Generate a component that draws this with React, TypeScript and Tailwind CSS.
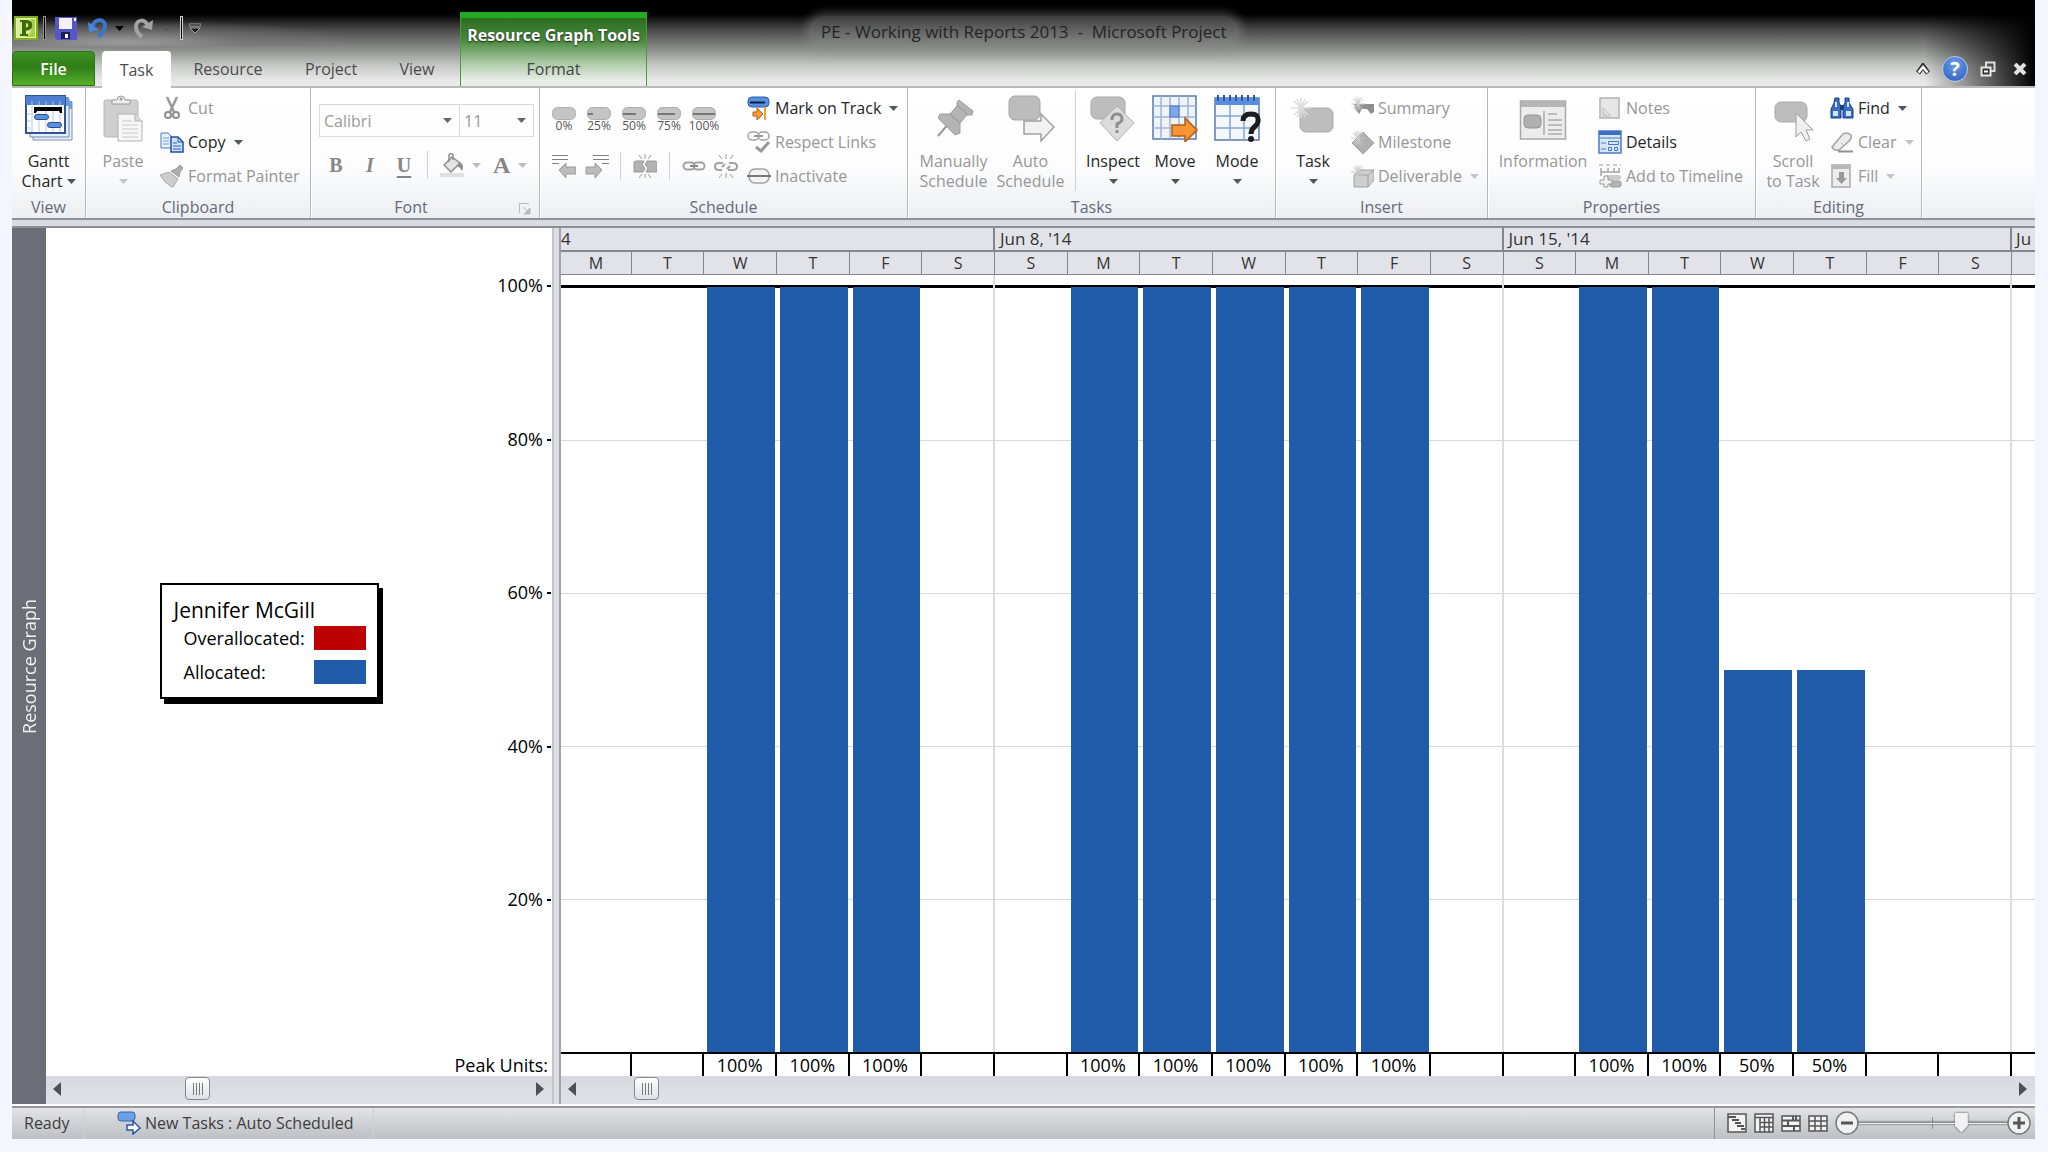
import type { ReactNode } from "react";

const days = [
  { day: "M", units: 0 },
  { day: "T", units: 0 },
  { day: "W", units: 100 },
  { day: "T", units: 100 },
  { day: "F", units: 100 },
  { day: "S", units: 0, weekEnd: true },
  { day: "S", units: 0 },
  { day: "M", units: 100 },
  { day: "T", units: 100 },
  { day: "W", units: 100 },
  { day: "T", units: 100 },
  { day: "F", units: 100 },
  { day: "S", units: 0, weekEnd: true },
  { day: "S", units: 0 },
  { day: "M", units: 100 },
  { day: "T", units: 100 },
  { day: "W", units: 50 },
  { day: "T", units: 50 },
  { day: "F", units: 0 },
  { day: "S", units: 0, weekEnd: true },
  { day: "", units: 0 },
];

const dayColumns = "grid grid-cols-[71fr_repeat(19,73fr)_23fr]";

const axisLabels = ["100%", "80%", "60%", "40%", "20%"];

function Arrow({ className = "text-[#555]" }: { className?: string }) {
  return (
    <svg viewBox="0 0 9 5" className={`h-[5px] w-[9px] shrink-0 ${className}`} aria-hidden="true">
      <path d="M0 0H9L4.500 5Z" fill="currentColor" />
    </svg>
  );
}

function Big({ children }: { children: ReactNode }) {
  return (
    <svg viewBox="0 0 48 48" className="size-12" fill="none" aria-hidden="true">
      {children}
    </svg>
  );
}

function Small({ children }: { children: ReactNode }) {
  return (
    <svg viewBox="0 0 24 24" className="size-6 shrink-0" fill="none" aria-hidden="true">
      {children}
    </svg>
  );
}

function Sparkle() {
  return (
    <path
      d="M8 1V15M1 8H15M3 3L13 13M13 3L3 13M5.300 1.500L10.700 14.500M10.700 1.500L5.300 14.500"
      stroke="#c9c9c9"
      strokeWidth="1"
    />
  );
}

function Group({ label, className, launcher, children }: { label: string; className: string; launcher?: boolean; children: ReactNode }) {
  return (
    <section
      aria-label={label}
      className={`flex shrink-0 flex-col border-r border-[#b4b7bc] pt-[3px] shadow-[1px_0_0_#fff] ${className}`}
    >
      <div className="flex h-[104px] shrink-0">{children}</div>
      <div className={`relative flex h-6 shrink-0 items-center justify-center text-[#656b78] ${launcher ? "pr-7" : ""}`}>
        {label}
        {launcher && (
          <button type="button" aria-label="Font settings" className="absolute right-2 top-2">
            <svg viewBox="0 0 12 12" className="size-3" fill="none" stroke="#b9b9b9" aria-hidden="true">
              <path d="M.5 10V.5H10M4 4L8 8" />
              <path d="M11 5V11H5Z" fill="#b9b9b9" />
            </svg>
          </button>
        )}
      </div>
    </section>
  );
}

function BigButton({ lines, icon, className, off, arrow }: { lines: string[]; icon: ReactNode; className: string; off?: boolean; arrow?: "inline" | "below" }) {
  return (
    <button
      type="button"
      className={`flex shrink-0 flex-col items-center pt-[3px] leading-5 ${off ? "text-[#969696]" : "text-[#262626]"} ${className}`}
    >
      {icon}
      <span className="mt-[9px] whitespace-nowrap">{lines[0]}</span>
      {lines[1] && (
        <span className="flex items-center gap-1 whitespace-nowrap">
          {lines[1]}
          {arrow === "inline" && <Arrow />}
        </span>
      )}
      {arrow === "below" && <Arrow className={off ? "mt-2 text-[#c4c4c4]" : "mt-2 text-[#555]"} />}
    </button>
  );
}

function Row({ label, icon, off, arrow }: { label: string; icon: ReactNode; off?: boolean; arrow?: boolean }) {
  return (
    <button
      type="button"
      className={`flex h-[34px] items-center gap-1 whitespace-nowrap ${off ? "text-[#969696]" : "text-[#262626]"}`}
    >
      {icon}
      {label}
      {arrow && <Arrow className={off ? "ml-1 text-[#c4c4c4]" : "ml-1 text-[#555]"} />}
    </button>
  );
}

function Divider({ className }: { className: string }) {
  return <span className={`w-px shrink-0 bg-[#cfd0d3] ${className}`} />;
}

function TitleBar() {
  return (
    <header className="flex h-[88px] shrink-0 border-b-2 border-[#b9b9b9] bg-[linear-gradient(180deg,#000_0,#000_14px,#4a4a4a_30px,#8f918f_50px,#c8cac8_66px,#e6e7e6_80px,#ebebeb_86px)]">
      <div className="flex w-[448px] shrink-0 flex-col justify-between">
        <div className="mt-[10px] flex h-9 items-center bg-[radial-gradient(ellipse_at_25%_90%,#9a9a9a_0%,#77777799_25%,transparent_50%)] pl-[2px]">
          <svg viewBox="0 0 24 24" className="size-6" aria-label="Project" role="img">
            <rect x="1" y="1" width="22" height="22" fill="#e4f2b4" stroke="#7fae1c" strokeWidth="2" />
            <path d="M3 3H21V21H12Q3 14 3 3Z" fill="#a9cf45" />
            <path d="M3 3H17V16L12 21H3Z" fill="#d9ec9c" />
            <path fillRule="evenodd" d="M6 4H13C20 4 20 14 13 14.500H12V18H14V20H6V18H8V6H6V4ZM12 7V11.500C15 11.500 15 7 12 7Z" fill="#3f6b08" />
          </svg>
          <span className="ml-[5px] h-6 w-[3px] border border-[#8f8f8f] bg-black" />
          <button type="button" aria-label="Save" className="ml-[9px]">
            <svg viewBox="0 0 22 24" className="h-6 w-[22px]" aria-hidden="true">
              <path d="M0 1H22V24H2L0 22Z" fill="#5557c8" />
              <path d="M4 2H17V13H4Z" fill="#f2f3ff" />
              <path d="M6 16H15V23H6Z" fill="#1d1e55" />
              <path d="M10 18H13V22H10ZM19 2H21V5H19Z" fill="#fff" />
            </svg>
          </button>
          <button type="button" aria-label="Undo" className="ml-[10px] flex items-center gap-[6px]">
            <svg viewBox="0 0 22 22" className="size-[22px]" fill="none" aria-hidden="true">
              <path d="M5 11C7 1 18 1 18 9C18 14 15 17 11 20" stroke="#3c76cf" strokeWidth="4" />
              <path d="M1 5L2 15L12 13Z" fill="#4a86df" />
            </svg>
            <Arrow className="text-black" />
          </button>
          <button type="button" aria-label="Redo" className="ml-2 flex items-center gap-2">
            <svg viewBox="0 0 22 22" className="size-[22px]" fill="none" aria-hidden="true">
              <path d="M16 10C14 1 4 2 4 10C4 14 6 17 10 20" stroke="#a3a3a3" strokeWidth="4" />
              <path d="M21 3L20 13L10 10Z" fill="#a3a3a3" />
            </svg>
            <Arrow className="text-[#555]" />
          </button>
          <span className="ml-[9px] h-6 w-[3px] border border-[#d0d0d0] bg-black" />
          <button type="button" aria-label="Customize toolbar" className="ml-[6px]">
            <svg viewBox="0 0 12 11" className="h-[11px] w-3" aria-hidden="true">
              <path d="M0 1H12V3H0ZM1 5H11L6 10Z" fill="#111" stroke="#d0d0d0" strokeWidth=".7" />
            </svg>
          </button>
        </div>
        <nav aria-label="Ribbon tabs" className="flex h-[35px] items-center text-[#4b4b4b]">
          <button
            type="button"
            className="h-full w-[83px] rounded-t border border-[#2a7414] bg-[linear-gradient(180deg,#3f9125,#2f7d16_45%,#55b02c)] font-semibold text-white"
          >
            File
          </button>
          <button type="button" className="ml-[7px] h-[37px] w-[69px] self-start rounded-t bg-white">Task</button>
          <button type="button" className="ml-[22px] w-[70px]">Resource</button>
          <button type="button" className="ml-[42px] w-[52px]">Project</button>
          <button type="button" className="ml-[41px] w-[38px]">View</button>
        </nav>
      </div>
      <div className="mt-3 flex w-[187px] shrink-0 flex-col items-center border-x border-[#4c9a40] border-t-[6px] border-t-[#22ab22] bg-[linear-gradient(180deg,#2c6d22_0,#47893b_22px,#a9c7a3_44px,#e8ede7_62px)]">
        <span className="mt-[5px] whitespace-nowrap font-bold leading-6 text-white [text-shadow:0_1px_2px_#222]">
          Resource Graph Tools
        </span>
        <button type="button" className="mt-3 leading-5 text-[#454545]">Format</button>
      </div>
      <div className="flex min-w-0 flex-1 justify-between bg-[linear-gradient(90deg,transparent_92%,#000_100%)]">
        <h1 className="ml-[162px] mt-4 h-8 whitespace-pre rounded-full bg-[#8a8c8a66] px-3 text-[17px] leading-8 text-[#242424] shadow-[0_0_8px_4px_#8a8c8a66]">
          PE - Working with Reports 2013  -  Microsoft Project
        </h1>
        <div className="mb-1 mr-2 flex items-center self-end">
          <button type="button" aria-label="Minimize ribbon">
            <svg viewBox="0 0 14 12" className="h-3 w-[14px]" fill="none" aria-hidden="true">
              <path d="M2 10L7 3L12 10" stroke="#333" strokeWidth="5" />
              <path d="M2.500 9.500L7 4L11.500 9.500" stroke="#fff" strokeWidth="2.500" />
            </svg>
          </button>
          <button type="button" aria-label="Help" className="ml-3 size-[26px] rounded-full border border-[#b8ccf0] bg-[radial-gradient(circle_at_50%_30%,#6c9be6,#2a5cc0)] text-xl font-bold leading-6 text-white">
            ?
          </button>
          <button type="button" aria-label="Restore window" className="ml-3">
            <svg viewBox="0 0 16 16" className="size-4" fill="none" aria-hidden="true">
              <path d="M6 6V1.500H14.500V10H11" stroke="#ddd" strokeWidth="2" />
              <rect x="1.500" y="6.500" width="9" height="8" fill="#333" stroke="#e6e6e6" strokeWidth="2" />
              <path d="M4 10.500H8" stroke="#fff" strokeWidth="2" />
            </svg>
          </button>
          <button type="button" aria-label="Close window" className="ml-[17px]">
            <svg viewBox="0 0 14 12" className="h-3 w-[14px]" aria-hidden="true">
              <path d="M2 1L12 11M12 1L2 11" stroke="#e2e2e2" strokeWidth="4" />
            </svg>
          </button>
        </div>
      </div>
    </header>
  );
}

const pills = [
  { label: "0%", end: 0 },
  { label: "25%", end: 6 },
  { label: "50%", end: 14 },
  { label: "75%", end: 18 },
  { label: "100%", end: 23 },
];

function Chain() {
  return (
    <>
      <rect x="1.500" y="8.500" width="11" height="7" rx="3.500" stroke="#a2a2a2" strokeWidth="2" />
      <rect x="11.500" y="8.500" width="11" height="7" rx="3.500" stroke="#a2a2a2" strokeWidth="2" />
      <path d="M8 12H16" stroke="#8a8a8a" strokeWidth="2" />
    </>
  );
}

function ScheduleTools() {
  return (
    <div className="flex w-[207px] flex-col pl-3">
      <div className="mt-4 flex">
        {pills.map((pill) => (
          <button key={pill.label} type="button" className="flex w-[35px] flex-col text-xs leading-3 text-[#555]">
            <svg viewBox="0 0 24 13" className="h-[13px] w-6" aria-hidden="true">
              <rect x=".5" y=".5" width="23" height="12" rx="5" fill="#c4c4c4" stroke="#adadad" />
              {pill.end > 0 && <path d={`M1 7H${pill.end}`} stroke="#777" strokeWidth="2" />}
            </svg>
            <span className="flex w-6 justify-center">{pill.label}</span>
          </button>
        ))}
      </div>
      <div className="mt-5 flex items-center">
        <button type="button" aria-label="Outdent task">
          <Small>
            <path d="M0 1.500H16M0 5.500H16M0 9.500H7" stroke="#808080" />
            <path d="M7 16L14 9V13H24V20H14V24Z" fill="#bcbcbc" stroke="#9a9a9a" />
          </Small>
        </button>
        <button type="button" aria-label="Indent task" className="ml-[9px]">
          <Small>
            <path d="M8 1.500H24M8 5.500H24M17 9.500H24" stroke="#808080" />
            <path d="M17 16L10 9V13H1V20H10V24Z" fill="#bcbcbc" stroke="#9a9a9a" />
          </Small>
        </button>
        <Divider className="ml-[11px] h-7" />
        <button type="button" aria-label="Split task" className="ml-3">
          <Small>
            <path d="M1 9Q1 7 3 7H11L9 11L12 14L10 18H1ZM14 7H22Q24 7 24 9V18H13L15 14L12 11Z" fill="#b2b2b2" stroke="#999" />
            <path d="M12 0V5M6 1L9 5M18 1L15 5M12 20V24M6 24L9 20M18 24L15 20" stroke="#999" />
          </Small>
        </button>
        <Divider className="ml-3 h-7" />
        <button type="button" aria-label="Link tasks" className="ml-3">
          <Small><Chain /></Small>
        </button>
        <button type="button" aria-label="Unlink tasks" className="ml-2">
          <Small>
            <path d="M9 9H5Q1 9 1 12.500T5 16H8M8 13L11 10M15 9H19Q23 9 23 12.500T19 16H14M13 15L16 12" stroke="#a2a2a2" strokeWidth="2" />
            <path d="M12 0V5M5 1L8 5M19 1L16 5M12 19V24M5 24L8 20M19 24L16 20" stroke="#999" />
          </Small>
        </button>
      </div>
    </div>
  );
}

function FontTools() {
  return (
    <div className="flex w-full flex-col pl-2">
      <div className="mt-[13px] flex text-[#999]">
        <label className="relative flex w-[141px] items-center">
          <select aria-label="Font" disabled className="h-[33px] w-full appearance-none border border-[#dadada] bg-transparent pl-1">
            <option>Calibri</option>
          </select>
          <Arrow className="absolute right-2 text-[#666]" />
        </label>
        <label className="relative -ml-px flex w-[75px] items-center">
          <select aria-label="Font size" disabled className="h-[33px] w-full appearance-none border border-[#dadada] bg-transparent pl-1">
            <option>11</option>
          </select>
          <Arrow className="absolute right-2 text-[#666]" />
        </label>
      </div>
      <div className="mt-[14px] flex h-7 items-center pl-[6px] font-['Liberation_Serif',serif] text-xl text-[#868686]">
        <button type="button" aria-label="Bold" className="w-[34px] pr-3 font-bold">B</button>
        <button type="button" aria-label="Italic" className="w-[34px] pr-3 font-bold italic">I</button>
        <button type="button" aria-label="Underline" className="w-[34px] pr-3 font-bold underline underline-offset-4">U</button>
        <Divider className="h-7" />
        <button type="button" aria-label="Background color" className="ml-3 flex items-center gap-2">
          <Small>
            <path d="M4 12L12 4L20 10L11 19Z" fill="#e4e4e4" stroke="#8f8f8f" strokeWidth="1.500" />
            <path d="M9 9V2Q11 -1 13 2V7" stroke="#8f8f8f" strokeWidth="1.500" />
            <path d="M19 9Q25 11 22 18Q20 14 17 13Z" fill="#8f8f8f" />
            <path d="M0 20H24V24H0Z" fill="#e0e0e0" />
          </Small>
          <Arrow className="text-[#bdbdbd]" />
        </button>
        <button type="button" aria-label="Font color" className="ml-3 flex items-center gap-2 text-2xl font-bold">
          A
          <Arrow className="text-[#bdbdbd]" />
        </button>
      </div>
    </div>
  );
}

function Ribbon() {
  return (
    <div className="flex h-[132px] shrink-0 overflow-hidden border-b-2 border-[#8e9196] bg-[linear-gradient(180deg,#fff_0%,#fdfdfe_60%,#eceef1_100%)]">
      <Group label="View" className="w-[74px]">
        <BigButton
          lines={["Gantt", "Chart"]}
          arrow="inline"
          className="w-[73px]"
          icon={
            <Big>
              <path d="M8 8H47V46H8Z" fill="#e9eef6" stroke="#7a90b5" />
              <path d="M5 5H44V43H5Z" fill="#e9eef6" stroke="#6a86b5" />
              <path d="M40 3H44V12H40ZM44 7H47V15H44Z" fill="#6f98dd" />
              <path d="M1 2H40V39H1Z" fill="#fff" stroke="#2d5596" strokeWidth="2" />
              <path d="M1 2H40V11H1Z" fill="#4f7fd0" />
              <path d="M7 7V11M14 7V11M21 7V11M28 7V11M35 7V11" stroke="#a5c2f2" />
              <path d="M7 12V38M14 12V38M21 12V38M28 12V38M35 12V38M2 20H6M2 27H6M2 34H6" stroke="#b5cbe8" />
              <path d="M9 13H37V19H35L34 17H12L11 19H9Z" fill="#000" />
              <rect x="9.500" y="20.500" width="14" height="5" rx="2.500" fill="#5b92dd" stroke="#254f8f" />
              <rect x="22.500" y="28.500" width="14" height="5" rx="2.500" fill="#5b92dd" stroke="#254f8f" />
            </Big>
          }
        />
      </Group>

      <Group label="Clipboard" className="w-[225px]">
        <BigButton
          lines={["Paste"]}
          off
          arrow="below"
          className="w-[74px]"
          icon={
            <Big>
              <rect x="5" y="6" width="34" height="37" rx="2" fill="#cfcfcf" stroke="#b9b9b9" />
              <path d="M13 10V6H18Q18 2 22 2T26 6H31V10Z" fill="#eee" stroke="#9d9d9d" />
              <circle cx="22" cy="5" r="1.500" fill="#999" />
              <path d="M19 20H36L43 27V47H19Z" fill="#f6f6f6" stroke="#b0b0b0" />
              <path d="M36 20V27H43" fill="#ddd" stroke="#b0b0b0" />
              <path d="M23 27H33M23 31H39M23 35H39M23 39H39M23 43H39" stroke="#c9c9c9" />
            </Big>
          }
        />
        <div className="flex flex-col">
          <Row
            label="Cut"
            off
            icon={
              <Small>
                <path d="M7 1L14 16M17 1L10 16" stroke="#9a9a9a" strokeWidth="2.500" />
                <circle cx="8" cy="19" r="3" stroke="#8f8f8f" strokeWidth="2" />
                <circle cx="16" cy="19" r="3" stroke="#8f8f8f" strokeWidth="2" />
              </Small>
            }
          />
          <Row
            label="Copy"
            arrow
            icon={
              <Small>
                <path d="M1 3H8L12 7V18H1Z" fill="#e8f1ff" stroke="#4676c6" />
                <path d="M3 8H9M3 11H9M3 14H9" stroke="#6d96d8" />
                <path d="M11 7H18L23 12V22H11Z" fill="#cfe1fb" stroke="#1f4fa8" strokeWidth="1.500" />
                <path d="M18 7V12H23" stroke="#1f4fa8" />
                <path d="M13 13H17M13 16H21M13 19H21" stroke="#3565b8" />
              </Small>
            }
          />
          <Row
            label="Format Painter"
            off
            icon={
              <Small>
                <path d="M0 11L9 8L18 15L13 23Q10 23 8 20L5 18Z" fill="#cdcdcd" stroke="#a9a9a9" />
                <path d="M11 7L16 5L20 1L23 4L20 8L19 13Z" fill="#aeaeae" stroke="#9a9a9a" />
              </Small>
            }
          />
        </div>
      </Group>

      <Group label="Font" className="w-[229px]" launcher>
        <FontTools />
      </Group>

      <Group label="Schedule" className="w-[368px]">
        <ScheduleTools />
        <div className="flex flex-col">
          <Row
            label="Mark on Track"
            arrow
            icon={
              <Small>
                <rect x="1" y="1" width="21" height="10" rx="4" fill="#5590df" stroke="#2d5ea8" />
                <path d="M3 6.500H18" stroke="#0c1f45" strokeWidth="2" />
                <path d="M18 11V24" stroke="#f0a040" strokeWidth="2" />
                <path d="M6 16H10V12L16 18L10 24V20H6Z" fill="#f29b38" stroke="#b4630d" />
              </Small>
            }
          />
          <Row
            label="Respect Links"
            off
            icon={
              <Small>
                <rect x="1" y="2" width="11" height="8" rx="4" stroke="#a2a2a2" strokeWidth="1.500" />
                <rect x="11" y="2" width="11" height="8" rx="4" stroke="#a2a2a2" strokeWidth="1.500" />
                <path d="M7 6H16" stroke="#999" strokeWidth="2" />
                <path d="M9 17L14 21L22 12" stroke="#999" strokeWidth="3" />
              </Small>
            }
          />
          <Row
            label="Inactivate"
            off
            icon={
              <Small>
                <rect x="2" y="5" width="20" height="14" rx="6" fill="#f4f4f4" stroke="#a0a0a0" strokeWidth="1.500" />
                <path d="M0 12H24" stroke="#777" strokeWidth="2" />
              </Small>
            }
          />
        </div>
      </Group>

      <Group label="Tasks" className="w-[368px]">
        <BigButton
          lines={["Manually", "Schedule"]}
          off
          className="ml-[7px] w-[77px]"
          icon={
            <Big>
              <path d="M8 42L20 28" stroke="#999" strokeWidth="2" />
              <path d="M29 6L43 17L42 21L37 21L30 29L30 39L25 41L8 24L10 20L20 20L27 12L27 8Z" fill="#b4b4b4" stroke="#9e9e9e" />
              <path d="M27 11L38 21M20 20L30 29" stroke="#8f8f8f" />
            </Big>
          }
        />
        <BigButton
          lines={["Auto", "Schedule"]}
          off
          className="w-[77px]"
          icon={
            <Big>
              <rect x="2" y="2" width="31" height="24" rx="6" fill="#bcbcbc" stroke="#a5a5a5" />
              <path d="M17 27H34V20L47 33L34 47V40H17Z" fill="#f2f2f2" stroke="#a0a0a0" strokeWidth="1.500" />
            </Big>
          }
        />
        <Divider className="ml-[6px] h-[100px]" />
        <BigButton
          lines={["Inspect"]}
          arrow="below"
          className="ml-[6px] w-[62px]"
          icon={
            <Big>
              <rect x="2" y="3" width="34" height="22" rx="6" fill="#bdbdbd" stroke="#a8a8a8" />
              <path d="M28 12L45 29L28 47L11 29Z" fill="#dcdcdc" stroke="#b3b3b3" />
              <path d="M23 26Q23 20 28 20T33 25Q33 28 28 30V34M28 36V39" stroke="#8f8f8f" strokeWidth="3" />
            </Big>
          }
        />
        <BigButton
          lines={["Move"]}
          arrow="below"
          className="w-[62px]"
          icon={
            <Big>
              <rect x="2" y="2" width="43" height="43" fill="#eef4fc" stroke="#5b79a8" strokeWidth="1.500" />
              <path d="M10 2V45M19 2V45M28 2V45M37 2V45M2 12H45M2 23H45M2 34H45" stroke="#9fb4d3" strokeWidth="1.500" />
              <rect x="19" y="12" width="9" height="11" fill="#7ea5ec" stroke="#4d74c4" />
              <path d="M21 31H34V24L46 36L34 48V42H21Z" fill="#f79433" stroke="#b25d13" strokeWidth="1.500" />
            </Big>
          }
        />
        <BigButton
          lines={["Mode"]}
          arrow="below"
          className="w-[62px]"
          icon={
            <Big>
              <path d="M2 4H46V46H2Z" fill="#f4f8fd" stroke="#5a78aa" strokeWidth="1.500" />
              <path d="M2 4H46V11H2Z" fill="#5c8ee0" />
              <path d="M5 1V7M11 1V7M17 1V7M23 1V7M29 1V7M35 1V7M41 1V7" stroke="#2c58a4" strokeWidth="2" />
              <path d="M17 11V46M31 11V46M2 22H46M2 34H46" stroke="#87a4d4" strokeWidth="1.500" />
              <path d="M30 27Q30 20 38 20T45 27C45 33 38 32 38 40" stroke="#1d1d1d" strokeWidth="5" />
              <circle cx="38" cy="45" r="3" fill="#1d1d1d" />
            </Big>
          }
        />
      </Group>

      <Group label="Insert" className="w-[212px]">
        <BigButton
          lines={["Task"]}
          arrow="below"
          className="w-[74px]"
          icon={
            <Big>
              <rect x="11" y="14" width="33" height="24" rx="6" fill="#bdbdbd" stroke="#a9a9a9" />
              <path d="M12 4V24M2 14H22M5 7L19 21M19 7L5 21M8 5L16 23M16 5L8 23" stroke="#dcdcdc" strokeWidth="1.500" />
            </Big>
          }
        />
        <div className="flex flex-col">
          <Row
            label="Summary"
            off
            icon={
              <Small>
                <path d="M4 8H24V16L21 18L17 13H12L9 18L6 14Z" fill="#8f8f8f" />
                <Sparkle />
              </Small>
            }
          />
          <Row
            label="Milestone"
            off
            icon={
              <Small>
                <path d="M13 2L24 13L13 24L2 13Z" fill="#b0b0b0" stroke="#a2a2a2" />
                <Sparkle />
              </Small>
            }
          />
          <Row
            label="Deliverable"
            off
            arrow
            icon={
              <Small>
                <path d="M4 11L9 6H24V16L18 23H4Z" fill="#cfcfcf" stroke="#a0a0a0" />
                <path d="M4 11H18L24 6M18 11V23M10 8L9 12" stroke="#a0a0a0" />
                <Sparkle />
              </Small>
            }
          />
        </div>
      </Group>

      <Group label="Properties" className="w-[268px]">
        <BigButton
          lines={["Information"]}
          off
          className="w-[110px]"
          icon={
            <Big>
              <rect x="1.500" y="7" width="45" height="38" fill="#ececec" stroke="#a9a9a9" strokeWidth="1.500" />
              <path d="M2 7H46V13H2Z" fill="#b5b5b5" />
              <rect x="5" y="21" width="17" height="13" rx="4" fill="#b0b0b0" stroke="#949494" />
              <path d="M25 17V41M29 20H38M29 26H43M29 31H43M29 36H43M29 40H43" stroke="#aaa" strokeWidth="1.500" />
            </Big>
          }
        />
        <div className="flex flex-col">
          <Row
            label="Notes"
            off
            icon={
              <Small>
                <path d="M2 2H21V22H2Z" fill="#e6e6e6" stroke="#b2b2b2" strokeWidth="1.500" />
                <path d="M5 12L12 19M5 16L9 20M5 12V20H13" stroke="#bbb" />
              </Small>
            }
          />
          <Row
            label="Details"
            icon={
              <Small>
                <path d="M1 1H23V23H1Z" fill="#d7e7fb" stroke="#4b7bc8" strokeWidth="1.500" />
                <path d="M1 1H23V5H1Z" fill="#3c6fc4" />
                <path d="M1 8H23M3 13H8M3 19H8M10.500 11.500H20.500V14.500H10.500ZM10.500 17.500H13.500V20.500H10.500ZM16.500 17.500H19.500V20.500H16.500Z" stroke="#4b78bd" />
              </Small>
            }
          />
          <Row
            label="Add to Timeline"
            off
            icon={
              <Small>
                <path d="M1 1H23" stroke="#999" strokeDasharray="4 3" />
                <path d="M3 4V12M21 4V9M3 8H21M10 4V8M16 4V8" stroke="#a5a5a5" strokeWidth="1.500" />
                <rect x="8" y="11" width="15" height="5" rx="2" fill="#ccc" />
                <rect x="12" y="17" width="11" height="6" rx="2" fill="#b5b5b5" stroke="#999" />
                <path d="M6 12H10V16H14V20H10V23H6V20H2V16H6Z" fill="#f2f2f2" stroke="#999" />
              </Small>
            }
          />
        </div>
      </Group>

      <Group label="Editing" className="w-[166px]">
        <BigButton
          lines={["Scroll", "to Task"]}
          off
          className="w-[74px]"
          icon={
            <Big>
              <rect x="6" y="8" width="32" height="20" rx="6" fill="#bdbdbd" stroke="#a9a9a9" />
              <path d="M27 19V43L32 38L37 47L41 45L37 36H44Z" fill="#efefef" stroke="#9d9d9d" />
            </Big>
          }
        />
        <div className="flex flex-col">
          <Row
            label="Find"
            arrow
            icon={
              <Small>
                <path d="M5 2H9V7L11 10V22H1V13L4 7ZM15 2H19V7L23 13V22H13V10L15 7Z" fill="#3c6dc0" stroke="#173d86" />
                <path d="M10 9H14V14H10Z" fill="#173d86" />
                <path d="M3 15H8V20H3ZM16 15H21V20H16ZM5 6H7V11H5ZM17 6H19V11H17Z" fill="#d3e3fa" />
              </Small>
            }
          />
          <Row
            label="Clear"
            off
            arrow
            icon={
              <Small>
                <path d="M2 17L12 5Q16 1 21 5Q22 9 18 12L9 20Q4 21 2 17Z" fill="#ececec" stroke="#a3a3a3" strokeWidth="1.500" />
                <path d="M11 13Q14 14 13 17" stroke="#bbb" />
                <path d="M8 21.500H23" stroke="#8f8f8f" strokeWidth="2" />
              </Small>
            }
          />
          <Row
            label="Fill"
            off
            arrow
            icon={
              <Small>
                <path d="M2 1H20V23H2Z" fill="#ececec" stroke="#aaa" strokeWidth="1.500" />
                <path d="M2 1H20V5H2Z" fill="#b8b8b8" />
                <path d="M9 8H14V14H17L11.500 20L6 14H9Z" fill="#999" />
              </Small>
            }
          />
        </div>
      </Group>
    </div>
  );
}

function ScrollBar({ label, thumb }: { label: string; thumb: string }) {
  return (
    <div className="flex h-7 shrink-0 items-center bg-[linear-gradient(180deg,#d6d9dc,#dfe2e9)] pb-[3px]">
      <button type="button" aria-label={`${label} left`} className="ml-[7px]">
        <svg viewBox="0 0 8 14" className="h-[14px] w-2" aria-hidden="true">
          <path d="M8 0V14L0 7Z" fill="#4d5055" />
        </svg>
      </button>
      <button
        type="button"
        aria-label={`${label} thumb`}
        className={`flex h-[23px] w-[25px] items-center justify-center gap-[2px] rounded-sm border border-[#85888f] bg-[linear-gradient(180deg,#fff,#dfe1e6)] ${thumb}`}
      >
        <span className="h-3 w-px bg-[#777]" />
        <span className="h-3 w-px bg-[#777]" />
        <span className="h-3 w-px bg-[#777]" />
        <span className="h-3 w-px bg-[#777]" />
      </button>
      <button type="button" aria-label={`${label} right`} className="ml-auto mr-2">
        <svg viewBox="0 0 8 14" className="h-[14px] w-2" aria-hidden="true">
          <path d="M0 0V14L8 7Z" fill="#4d5055" />
        </svg>
      </button>
    </div>
  );
}

function LegendPane() {
  return (
    <div className="flex w-[506px] shrink-0 flex-col bg-white text-lg text-black">
      <div className="flex flex-1">
        <div className="flex flex-1 items-center justify-center">
          <div className="flex h-[116px] w-[219px] flex-col border-2 border-black bg-white pl-3 pr-[11px] shadow-[4px_5px_0_#000]">
            <p className="mt-[11px] text-[21px] leading-7">Jennifer McGill</p>
            <div className="flex h-7 items-center justify-between pl-[10px]">
              Overallocated:
              <span className="h-6 w-[52px] bg-[#bd0000]" />
            </div>
            <div className="mt-[6px] flex h-7 items-center justify-between pl-[10px]">
              Allocated:
              <span className="h-6 w-[52px] bg-[#205ca9]" />
            </div>
          </div>
        </div>
        <div className="flex w-[60px] flex-col pb-3 pt-[45px]">
          {axisLabels.map((label) => (
            <div key={label} className="flex flex-1 items-start justify-end gap-1 pr-px leading-6">
              {label}
              <span className="mt-[12px] h-[2px] w-1 bg-black" />
            </div>
          ))}
        </div>
      </div>
      <p className="flex h-[23px] shrink-0 items-center justify-end pr-1">Peak Units:</p>
      <ScrollBar label="Legend scroll" thumb="ml-[124px]" />
    </div>
  );
}

function GraphPane() {
  return (
    <div className="flex min-w-0 flex-1 flex-col bg-white text-[#333]">
      <div className="grid h-[24px] shrink-0 grid-cols-[436fr_511fr_511fr_23fr] overflow-hidden border-b-2 border-[#83868c] bg-[#e1e3e8] text-[17px] leading-[22px]">
        <span className="border-r-2 border-[#83868c]">4</span>
        <span className="border-r-2 border-[#83868c] pl-[5px]">Jun 8, '14</span>
        <span className="border-r-2 border-[#83868c] pl-[5px]">Jun 15, '14</span>
        <span className="overflow-hidden pl-1">Ju</span>
      </div>
      <div className={`h-[23px] shrink-0 border-b border-[#83868c] bg-[#e1e3e8] text-center leading-[22px] ${dayColumns}`}>
        {days.map((d, i) => (
          <span key={i} className="border-r border-[#83868c] last:border-r-0">{d.day}</span>
        ))}
      </div>
      <div className="relative flex flex-1 flex-col pt-[10px]">
        <div className="absolute inset-x-0 bottom-0 top-[10px] flex flex-col">
          {axisLabels.map((label) => (
            <span key={label} className="flex-1 border-t border-[#d9d9d9] first:border-t-[3px] first:border-black" />
          ))}
        </div>
        <div className={`absolute inset-0 ${dayColumns}`}>
          {days.map((d, i) => (
            <span key={i} className={d.weekEnd ? "border-r-2 border-[#dcdcdc]" : ""} />
          ))}
        </div>
        <div className={`relative flex-1 pt-[2px] ${dayColumns}`}>
          {days.map((d, i) => (
            <div key={i} className="flex items-end pl-[3px] pr-[2px]">
              <div className="w-full bg-[#205ca9]" style={{ height: `${d.units}%` }} />
            </div>
          ))}
        </div>
      </div>
      <div className={`h-[24px] shrink-0 border-t-2 border-black text-center text-lg leading-[22px] text-black ${dayColumns}`}>
        {days.map((d, i) => (
          <span key={i} className="border-r-2 border-black last:border-r-0">
            {d.units > 0 && `${d.units}%`}
          </span>
        ))}
      </div>
      <ScrollBar label="Graph scroll" thumb="ml-[58px]" />
    </div>
  );
}

function StatusBar() {
  return (
    <footer className="flex h-[33px] shrink-0 items-center border-t-2 border-[#94979c] bg-[linear-gradient(180deg,#e3e4e7,#d3d4d8_40%,#bfc0c5)] text-[#3d3d3d]">
      <span className="w-[71px] pb-[2px] pl-3">Ready</span>
      <Divider className="h-full bg-[#8f9298]" />
      <button type="button" className="ml-[33px] flex items-center gap-1 pb-[2px]">
        <Small>
          <rect x="1" y="1" width="17" height="9" rx="3" fill="#6ba0e6" stroke="#39659f" />
          <path d="M10 14H16V10L23 17L16 23V19H10Z" fill="#fff" stroke="#2b55a0" strokeWidth="1.500" />
        </Small>
        New Tasks : Auto Scheduled
      </button>
      <Divider className="ml-[19px] h-full bg-[#8f9298]" />
      <div className="ml-auto flex h-full items-center gap-[7px] border-l border-[#8f9298] pb-[2px] pl-3 pr-1">
        <button type="button" aria-label="Gantt chart view">
          <svg viewBox="0 0 20 20" className="size-5" fill="none" stroke="#555" strokeWidth="1.500" aria-hidden="true">
            <path d="M1 1H19V19H1Z" fill="#f3f3f3" />
            <path d="M1 4H9M5 7H12M8 10H14M10 13H17M14 16H18" strokeWidth="2" />
          </svg>
        </button>
        <button type="button" aria-label="Task usage view">
          <svg viewBox="0 0 20 20" className="size-5" fill="none" stroke="#555" strokeWidth="1.500" aria-hidden="true">
            <path d="M1 1H19V19H1Z" fill="#f3f3f3" />
            <path d="M1 4.500H19M6 4V19M10.500 4V19M15 4V19M6 9.500H19M6 14H19" />
          </svg>
        </button>
        <button type="button" aria-label="Team planner view">
          <svg viewBox="0 0 20 20" className="size-5" fill="none" stroke="#555" strokeWidth="1.500" aria-hidden="true">
            <path d="M1 3H19V18H1Z" fill="#f3f3f3" />
            <path d="M1 7.500H19M1 13H19M12 3V7M15 3V7M7 8V13M13 13V18" strokeWidth="2" />
          </svg>
        </button>
        <button type="button" aria-label="Resource sheet view">
          <svg viewBox="0 0 20 20" className="size-5" fill="none" stroke="#555" strokeWidth="1.500" aria-hidden="true">
            <path d="M1 3H19V18H1Z" fill="#f3f3f3" />
            <path d="M1 8H19M1 13H19M7 3V18M13 3V18" />
          </svg>
        </button>
        <div className="flex items-center">
          <button type="button" aria-label="Zoom out">
            <svg viewBox="0 0 24 24" className="size-6" aria-hidden="true">
              <circle cx="12" cy="12" r="11" fill="#f1f1f2" stroke="#77797d" strokeWidth="1.500" />
              <path d="M6 12H18" stroke="#555" strokeWidth="3" />
            </svg>
          </button>
          <div className="relative flex items-center">
            <span className="absolute left-[73px] h-3 w-px bg-[#8b8d91]" />
            <input
              type="range"
              aria-label="Zoom"
              defaultValue={71}
              className="relative h-6 w-[148px] appearance-none bg-[linear-gradient(180deg,transparent_11px,#8b8d91_11px,#8b8d91_12px,#eee_12px,#eee_13px,transparent_13px)] drop-shadow-[0_0_1px_#444] [&::-webkit-slider-thumb]:h-5 [&::-webkit-slider-thumb]:w-[13px] [&::-webkit-slider-thumb]:appearance-none [&::-webkit-slider-thumb]:bg-[#f1f1f2] [&::-webkit-slider-thumb]:[clip-path:polygon(0_0,100%_0,100%_65%,50%_100%,0_65%)]"
            />
          </div>
          <button type="button" aria-label="Zoom in">
            <svg viewBox="0 0 24 24" className="size-6" aria-hidden="true">
              <circle cx="12" cy="12" r="11" fill="#f1f1f2" stroke="#77797d" strokeWidth="1.500" />
              <path d="M6 12H18M12 6V18" stroke="#555" strokeWidth="3" />
            </svg>
          </button>
        </div>
      </div>
    </footer>
  );
}

export default function App() {
  return (
    <div className="flex h-screen flex-col bg-[#f4f6fe] pb-[13px] pl-3 pr-[13px] font-['Open_Sans','Noto_Sans',sans-serif] text-base">
      <TitleBar />
      <Ribbon />
      <main className="flex min-h-0 flex-1 flex-col bg-[#d9dce1] pt-[6px]">
        <div className="flex min-h-0 flex-1 border-t-2 border-[#8b8e93] bg-white">
          <div className="flex w-[34px] shrink-0 items-center justify-center bg-[#6b6e77]">
            <span className="rotate-180 whitespace-nowrap text-lg text-[#f0f0f0] [writing-mode:vertical-rl]">Resource Graph</span>
          </div>
          <LegendPane />
          <div className="w-[9px] shrink-0 border-l-2 border-r-2 border-l-[#c3c5c9] border-r-[#a0a3a8] bg-[#dcdee2]" />
          <GraphPane />
        </div>
        <div className="h-[2px] shrink-0 bg-white" />
      </main>
      <StatusBar />
    </div>
  );
}
